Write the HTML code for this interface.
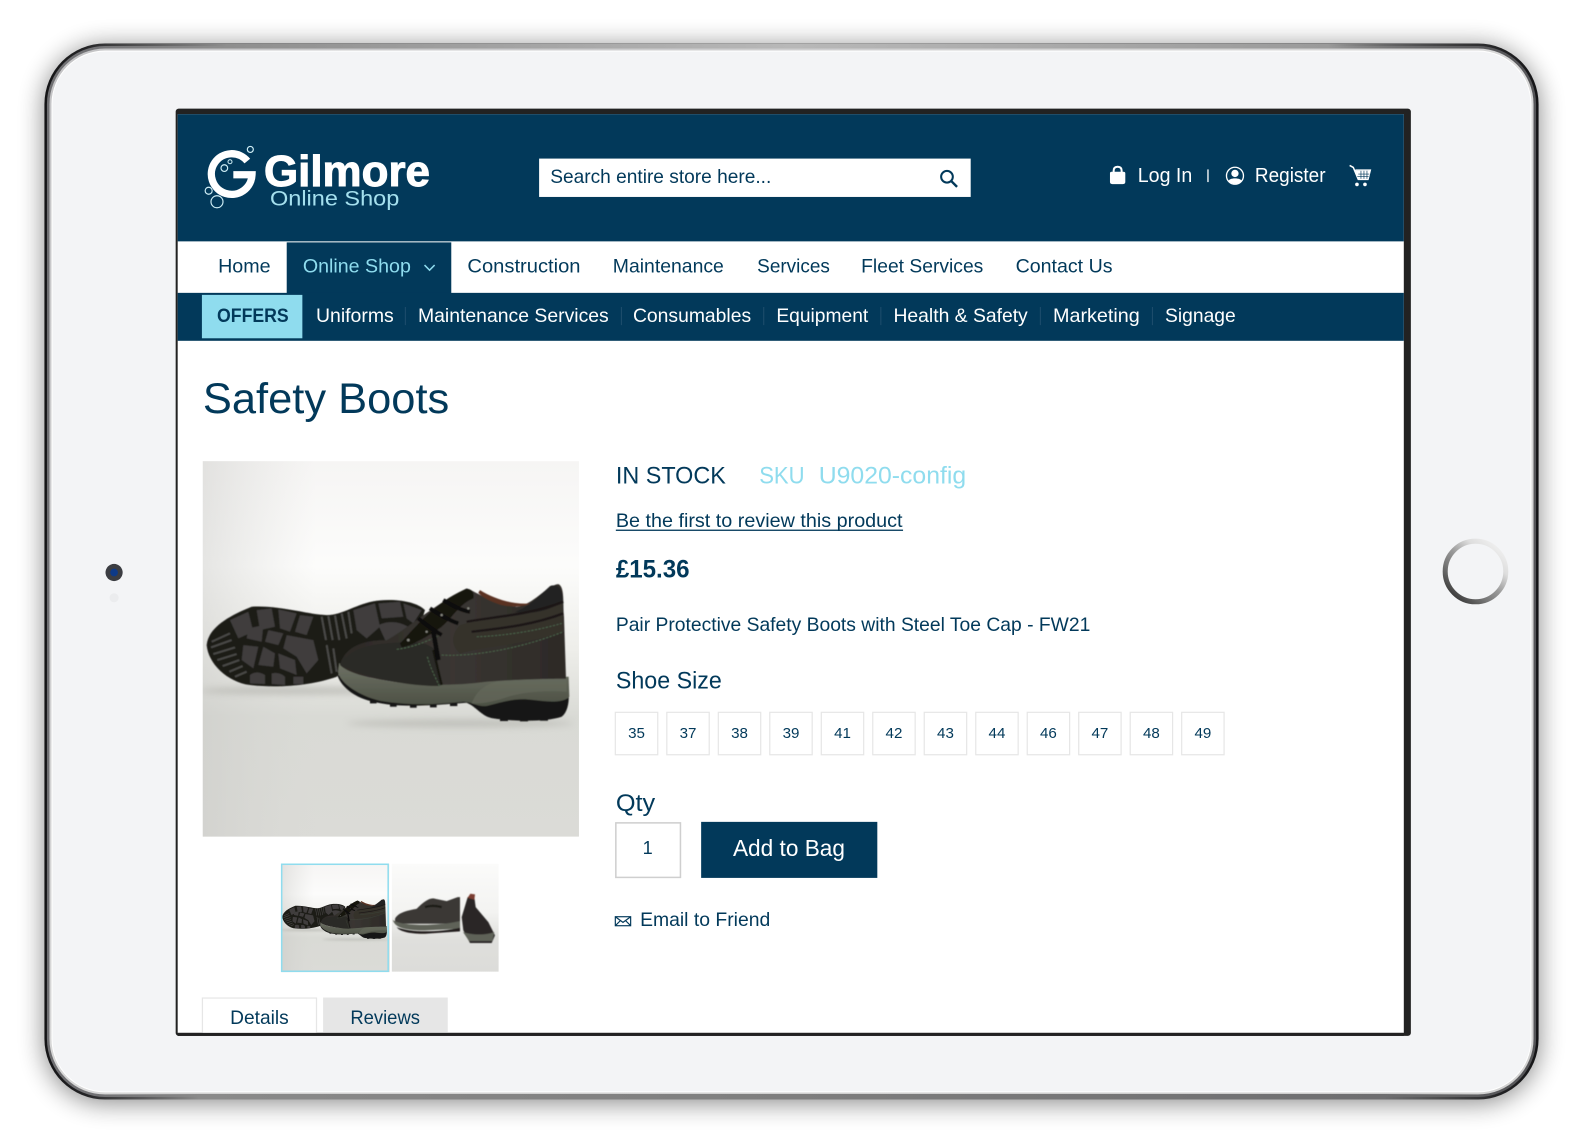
<!DOCTYPE html>
<html><head><meta charset="utf-8"><title>Gilmore Online Shop – Safety Boots</title>
<style>
html,body{margin:0;padding:0;background:#fff;width:1583px;height:1144px;overflow:hidden}
svg{display:block}
text{font-family:"Liberation Sans",sans-serif;fill:#02395a}
</style></head><body>
<svg width="1583" height="1144" viewBox="0 0 1568 1133" xmlns="http://www.w3.org/2000/svg">
<defs>
<filter id="sh" x="-10%" y="-10%" width="120%" height="120%"><feGaussianBlur stdDeviation="13"/></filter>
<filter id="soft" x="-5%" y="-5%" width="110%" height="110%"><feGaussianBlur stdDeviation="1.6"/></filter>
<filter id="soft2" x="-20%" y="-100%" width="140%" height="300%"><feGaussianBlur stdDeviation="10"/></filter>
<linearGradient id="edge" x1="0" x2="1" y1="0" y2="0"><stop offset="0" stop-color="#141416"/><stop offset=".04" stop-color="#2a2a2c"/><stop offset=".5" stop-color="#777"/><stop offset=".96" stop-color="#2a2a2c"/><stop offset="1" stop-color="#141416"/></linearGradient>
<linearGradient id="edge1" x1="0" x2="1" y1="0" y2="0"><stop offset="0" stop-color="#6f6f72"/><stop offset=".5" stop-color="#999"/><stop offset="1" stop-color="#555558"/></linearGradient>
<linearGradient id="edge2" x1="0" x2="1" y1="0" y2="1"><stop offset="0" stop-color="#c4c4c6"/><stop offset=".5" stop-color="#d8d8d8"/><stop offset="1" stop-color="#d2d2d2"/></linearGradient>
<linearGradient id="topb" x1="0" x2="1" y1="0" y2="0"><stop offset="0" stop-color="#888" stop-opacity="0"/><stop offset=".1" stop-color="#8e8e8e"/><stop offset=".5" stop-color="#b8b8b8"/><stop offset=".88" stop-color="#9a9a9a"/><stop offset="1" stop-color="#555" stop-opacity="0"/></linearGradient>
<linearGradient id="botb" x1="0" x2="1" y1="0" y2="0"><stop offset="0" stop-color="#777" stop-opacity="0"/><stop offset=".08" stop-color="#8a8a8a"/><stop offset=".5" stop-color="#7e7e7e"/><stop offset=".92" stop-color="#6e6e70"/><stop offset="1" stop-color="#666" stop-opacity="0"/></linearGradient>
<linearGradient id="ring" x1=".1" y1=".95" x2=".9" y2=".05"><stop offset="0" stop-color="#333"/><stop offset=".3" stop-color="#777"/><stop offset=".5" stop-color="#999"/><stop offset=".75" stop-color="#ddd"/><stop offset="1" stop-color="#f2f2f2"/></linearGradient>
<linearGradient id="upper" x1="0" x2="1" y1="0" y2="0"><stop offset="0" stop-color="#2c2926"/><stop offset=".5" stop-color="#3a3632"/><stop offset="1" stop-color="#2d2a27"/></linearGradient>
<linearGradient id="mid" x1="0" x2="0" y1="0" y2="1"><stop offset="0" stop-color="#6e7265"/><stop offset="1" stop-color="#4c5044"/></linearGradient>
<linearGradient id="pbg" x1="0" x2="0" y1="0" y2="1"><stop offset="0" stop-color="#f6f5f4"/><stop offset=".28" stop-color="#fcfcfb"/><stop offset=".5" stop-color="#eeeeea"/><stop offset=".68" stop-color="#d9dad5"/><stop offset="1" stop-color="#dbdbd7"/></linearGradient>
<linearGradient id="pleft" x1="0" x2="1" y1="0" y2="0"><stop offset="0" stop-color="#c9c9c6" stop-opacity=".45"/><stop offset=".3" stop-color="#d6d6d3" stop-opacity="0"/></linearGradient>
<linearGradient id="tbg" x1="0" x2="0" y1="0" y2="1"><stop offset="0" stop-color="#fbfbfa"/><stop offset=".45" stop-color="#f3f3f1"/><stop offset=".7" stop-color="#dfdfdc"/><stop offset="1" stop-color="#dcdcd9"/></linearGradient>
<clipPath id="cp1"><rect x="8" y="18" width="1129" height="1127"/></clipPath>
<clipPath id="cp2"><rect x="0" y="0" width="106" height="107"/></clipPath>

<g id="photo">
 <g clip-path="url(#cp1)">
  <rect x="8" y="18" width="1129" height="1127" fill="url(#pbg)"/>
  <rect x="8" y="18" width="1129" height="1127" fill="url(#pleft)"/>
  <g transform="translate(0,315)">
   <ellipse cx="300" cy="392" rx="300" ry="12" fill="#a8a8a2" opacity=".55" filter="url(#soft2)"/>
   <ellipse cx="780" cy="490" rx="340" ry="12" fill="#a8a8a2" opacity=".5" filter="url(#soft2)"/>
   <g filter="url(#soft)">
   <!-- sole -->
   <path d="M20 255C25 205 80 170 155 140C240 135 330 165 380 165C430 165 470 130 530 122C590 115 650 125 675 150L640 260L460 300L410 350C340 375 240 385 150 375C80 365 25 310 20 255Z" fill="#1b1a18"/>
   <g fill="#3f3e3c">
    <path d="M90 180L145 155L160 215L115 235Z"/><path d="M170 150L215 145L225 200L180 210Z"/><path d="M235 148L290 160L270 215L240 205Z"/><path d="M300 165L340 170L320 225L285 215Z"/>
    <path d="M145 205L190 195L185 245L140 235Z"/><path d="M205 210L250 220L235 255L195 245Z"/><path d="M260 225L340 240L355 300L320 340L290 290L250 265Z"/>
    <path d="M130 255L175 260L160 325L125 300Z"/><path d="M190 260L225 280L220 320L175 315Z"/><path d="M235 280L285 300L290 345L240 325Z"/>
    <path d="M150 345Q170 330 195 345L195 372L150 370Z"/><path d="M215 340Q240 335 255 350L255 375L215 372Z"/><path d="M280 350L310 350L310 372L280 372Z"/>
    <path d="M460 150L525 130L540 200L500 235L470 210Z"/><path d="M535 130L600 125L610 170L545 175Z"/><path d="M610 130L665 150L640 190L620 175Z"/>
    <path d="M535 195Q580 175 625 200L620 240L560 250Z"/>
   </g>
   <g stroke="#4a4946" stroke-width="6" fill="none">
    <path d="M35 245L90 220M33 262L95 240M40 282L105 262M52 300L110 282M68 318L118 300M88 335L128 318M105 350L140 335"/>
    <path d="M365 170L378 240M385 168L398 240M405 166L418 240M425 160L440 235M445 155L455 220"/>
    <path d="M380 255L395 340M400 265L410 335"/>
   </g>
   <!-- boot outsole -->
   <path d="M412 345C425 385 470 415 520 425C600 445 700 435 800 428C830 440 845 470 880 475C950 485 1040 485 1085 470C1105 455 1108 420 1106 395L900 360L600 370Z" fill="#191816"/>
   <g fill="#191816"><rect x="510" y="418" width="20" height="12"/><rect x="570" y="428" width="20" height="12"/><rect x="630" y="432" width="20" height="11"/><rect x="690" y="432" width="20" height="10"/><rect x="750" y="428" width="22" height="10"/><rect x="900" y="472" width="24" height="11"/><rect x="960" y="474" width="24" height="10"/><rect x="1020" y="472" width="24" height="10"/></g>
   <!-- midsole -->
   <path d="M418 308C430 330 480 350 560 362C650 378 760 375 860 360C950 350 1040 350 1106 350L1108 410C1090 430 1040 425 1000 420C950 412 910 425 860 438C830 440 815 425 790 425C720 432 630 438 540 422C480 408 420 370 414 335Z" fill="url(#mid)"/>
   <path d="M815 430C830 390 860 370 900 362L1100 352L1100 395C1040 390 960 395 910 415C880 425 845 432 815 430Z" fill="#676b5d" opacity=".6"/>
   <!-- upper -->
   <path d="M420 315C432 270 470 240 560 240C610 215 700 135 800 85C830 95 870 130 950 140C1000 135 1040 75 1075 72C1095 80 1088 130 1092 170L1098 356C1040 356 950 358 860 365C760 378 650 378 560 362C490 352 440 335 420 315Z" fill="url(#upper)"/>
   <path d="M840 90C880 115 940 135 990 130C975 140 940 142 905 135C870 125 845 110 835 98Z" fill="#5a3022"/>
   <path d="M780 195C850 175 960 170 1088 130L1090 215C990 250 880 255 780 280C750 255 755 220 780 195Z" fill="#34312c"/>
   <path d="M430 310C445 270 500 255 560 250C620 245 680 240 705 270C715 310 720 340 720 378C640 378 570 365 500 345C465 335 440 325 430 310Z" fill="#2b2926"/>
   <path d="M1050 78C1070 70 1090 85 1088 125C1050 150 1000 165 945 155C990 140 1020 105 1050 78Z" fill="#242220"/>
   <path d="M800 185C880 170 990 165 1090 125M815 215C900 205 1000 195 1090 160" stroke="#1a1816" stroke-width="7" fill="none"/>
   <path d="M725 285C810 290 950 270 1090 215" stroke="#4e6a4e" stroke-width="2.5" stroke-dasharray="7 4" fill="none"/>
   <path d="M590 268C640 262 690 240 720 225M682 290C690 320 705 350 718 378M830 230C900 228 1000 215 1085 190" stroke="#4e6a4e" stroke-width="2.5" stroke-dasharray="7 4" fill="none"/>
   <path d="M700 270L725 375" stroke="#141311" stroke-width="7" fill="none"/>
   <!-- laces -->
   <path d="M600 250C640 210 700 130 790 90C810 80 825 95 820 115C780 130 760 170 725 200C690 225 640 255 605 262Z" fill="#131210"/>
   <path d="M655 175C680 195 700 210 725 225M690 145C720 165 745 180 775 190M730 120C755 135 780 150 810 155" stroke="#100f0d" stroke-width="12" fill="none"/>
   <path d="M700 215L715 300" stroke="#100f0d" stroke-width="14" fill="none"/>
   <g fill="#8a8a82"><circle cx="625" cy="240" r="4"/><circle cx="680" cy="215" r="3.500"/><circle cx="725" cy="165" r="3.500"/><circle cx="805" cy="145" r="3.500"/></g>
   </g>
  </g>
 </g>
</g>
</defs>

<rect width="1568" height="1133" fill="#fff"/>
<!-- tablet shadow -->
<rect x="44" y="46" width="1480" height="1046" rx="60" fill="#000" opacity=".48" filter="url(#sh)"/>
<!-- frame -->
<rect x="44" y="43" width="1480" height="1046" rx="60" fill="url(#edge)"/>
<rect x="46.500" y="45.500" width="1475" height="1041" rx="57.500" fill="url(#edge1)"/>
<rect x="49" y="48" width="1470" height="1036" rx="55" fill="url(#edge2)"/>
<rect x="85" y="43.500" width="1398" height="4.500" fill="url(#topb)"/>
<rect x="85" y="1083.500" width="1398" height="5.500" fill="url(#botb)"/>
<rect x="51" y="50" width="1466" height="1032" rx="53" fill="#fff"/>
<rect x="52" y="51" width="1464" height="1030" rx="52" fill="#f3f4f6"/>
<!-- camera -->
<circle cx="113" cy="567" r="8.500" fill="#3b3d42"/><circle cx="113" cy="567" r="3.800" fill="#0d3a88"/>
<circle cx="113" cy="592" r="4.500" fill="#ebecee"/>
<!-- home -->
<circle cx="1461.500" cy="566" r="30" fill="none" stroke="url(#ring)" stroke-width="5"/>
<!-- screen -->
<rect x="174" y="107.500" width="1223.500" height="918.500" rx="3" fill="#222"/>
<rect x="176" y="113" width="1214.500" height="910" fill="#fff"/>
<rect x="176" y="113" width="1214.500" height="126" fill="#02395a"/>

<!-- logo -->
<g transform="scale(.9905) translate(170,100) scale(.33333)">
 <path d="M232 183A61 61 0 1 0 246 224H190" fill="none" stroke="#fff" stroke-width="22"/>
 <circle cx="163" cy="204" r="10" fill="#02395a" stroke="#cfeef6" stroke-width="3.500"/>
 <circle cx="180" cy="185" r="6" fill="#02395a" stroke="#cfeef6" stroke-width="3"/>
 <g fill="none" stroke="#cfeef6" stroke-width="3.500"><circle cx="241" cy="148" r="9"/><circle cx="116" cy="272" r="10.500"/><circle cx="141" cy="305" r="18"/></g>
 <text x="282" y="258" font-size="130" font-weight="700" textLength="498" lengthAdjust="spacingAndGlyphs" style="fill:#fff;stroke:#fff;stroke-width:3">Gilmore</text>
 <text x="300" y="317" font-size="65" textLength="388" lengthAdjust="spacingAndGlyphs" style="fill:#a5e0ee">Online Shop</text>
</g>

<!-- search -->
<rect x="534" y="157" width="427.500" height="38" fill="#fff"/>
<text x="545" y="181" font-size="19" textLength="219" lengthAdjust="spacingAndGlyphs">Search entire store here...</text>
<circle cx="938" cy="175" r="5.800" fill="none" stroke="#02395a" stroke-width="2"/><path d="M942.500 179.500L948 185" stroke="#02395a" stroke-width="2.400"/>

<!-- account -->
<g transform="scale(.9905) translate(1080,140) scale(.33333)" fill="#fff">
 <path d="M90 100Q90 95 95 95H130Q136 95 136 100V125Q136 132 129 132H97Q90 132 90 125Z"/>
 <path d="M101 97V92Q101 80 113 80Q125 80 125 92V97" fill="none" stroke="#fff" stroke-width="6"/>
 <rect x="382" y="88" width="4" height="38"/>
 <circle cx="465" cy="107" r="25.500" fill="none" stroke="#fff" stroke-width="4"/>
 <circle cx="465" cy="100" r="11"/><path d="M445 124C447 112 483 112 486 124Q466 138 445 124Z"/>
 <path d="M809 76L820 82L835 118H864L871 90H826" fill="none" stroke="#fff" stroke-width="4.500"/>
 <path d="M826 92H870L864 116H836Z"/><path d="M835 102H868M832 109H866M843 92V116M852 92V116M861 92V116" stroke="#02395a" stroke-width="2"/>
 <circle cx="831" cy="133" r="5.500"/><circle cx="855" cy="133" r="5.500"/>
</g>
<text x="1127" y="180" font-size="20" textLength="54" lengthAdjust="spacingAndGlyphs" style="fill:#fff">Log In</text>
<text x="1243" y="180" font-size="20" textLength="70" lengthAdjust="spacingAndGlyphs" style="fill:#fff">Register</text>

<!-- main nav -->
<rect x="284" y="240" width="163" height="50.500" fill="#02395a"/>
<g font-size="19.500">
<text x="216" y="270" textLength="52" lengthAdjust="spacingAndGlyphs">Home</text>
<text x="300" y="270" textLength="107" lengthAdjust="spacingAndGlyphs" style="fill:#8fdcee">Online Shop</text>
<text x="463" y="270" textLength="112" lengthAdjust="spacingAndGlyphs">Construction</text>
<text x="607" y="270" textLength="110" lengthAdjust="spacingAndGlyphs">Maintenance</text>
<text x="750" y="270" textLength="72" lengthAdjust="spacingAndGlyphs">Services</text>
<text x="853" y="270" textLength="121" lengthAdjust="spacingAndGlyphs">Fleet Services</text>
<text x="1006" y="270" textLength="96" lengthAdjust="spacingAndGlyphs">Contact Us</text>
</g>
<path d="M420.500 262.500L425.500 267.500L430.500 262.500" fill="none" stroke="#8fdcee" stroke-width="1.500"/>

<!-- sub nav -->
<rect x="176" y="290" width="1214.500" height="47.500" fill="#02395a"/>
<rect x="200" y="292" width="99.500" height="43" fill="#8fdcee"/>
<text x="215" y="319" font-size="19" font-weight="700" textLength="71" lengthAdjust="spacingAndGlyphs">OFFERS</text>
<g font-size="19.500">
<text x="313" y="319" textLength="77" lengthAdjust="spacingAndGlyphs" style="fill:#fff">Uniforms</text>
<text x="414" y="319" textLength="189" lengthAdjust="spacingAndGlyphs" style="fill:#fff">Maintenance Services</text>
<text x="627" y="319" textLength="117" lengthAdjust="spacingAndGlyphs" style="fill:#fff">Consumables</text>
<text x="769" y="319" textLength="91" lengthAdjust="spacingAndGlyphs" style="fill:#fff">Equipment</text>
<text x="885" y="319" textLength="133" lengthAdjust="spacingAndGlyphs" style="fill:#fff">Health &amp; Safety</text>
<text x="1043" y="319" textLength="86" lengthAdjust="spacingAndGlyphs" style="fill:#fff">Marketing</text>
<text x="1154" y="319" textLength="70" lengthAdjust="spacingAndGlyphs" style="fill:#fff">Signage</text>
</g>
<path d="M401.500 304V322M615.500 304V322M756.500 304V322M872.500 304V322M1030.500 304V322M1141.500 304V322" stroke="#1f4e6d" stroke-width="1"/>

<!-- title -->
<text x="201" y="409" font-size="42" textLength="244" lengthAdjust="spacingAndGlyphs">Safety Boots</text>

<!-- photo -->
<use href="#photo" transform="scale(.9905) translate(200,455) scale(.33333)"/>

<!-- thumbs -->
<g transform="translate(278.500,855.500)">
 <use href="#photo" transform="scale(.0953) translate(-8,-18)"/>
 <rect x=".5" y=".5" width="105.500" height="106" fill="none" stroke="#8fdcee" stroke-width="1.500"/>
</g>
<g transform="translate(388,855.500)">
 <g clip-path="url(#cp2)">
 <rect width="106" height="107" fill="url(#tbg)"/>
 <g transform="scale(.33)" filter="url(#soft)">
  <path d="M10 165C20 145 50 140 75 135C95 115 115 100 130 105L165 112L198 100L205 100L205 180L10 180Z" fill="#3a3835"/>
  <path d="M3 168C20 185 120 190 205 172L205 195L100 200C50 200 10 195 3 168Z" fill="#5f6258"/>
  <path d="M15 190C50 205 130 208 205 192L205 203L100 210C60 210 25 205 15 190Z" fill="#201f1d"/>
  <path d="M100 130C115 125 130 125 150 130" stroke="#1c1a18" stroke-width="7" fill="none"/>
  <path d="M228 100L248 100L252 130L290 175L310 215L300 238L235 238L215 200L210 160Z" fill="#2a2826"/>
  <path d="M228 102L236 90L250 92L248 108Z" fill="#7a3c30"/>
  <path d="M214 205C240 215 285 215 308 205L302 232L232 232Z" fill="#5f6258"/>
 </g>
 </g>
</g>

<!-- product info -->
<text x="610" y="479" font-size="24" textLength="109" lengthAdjust="spacingAndGlyphs">IN STOCK</text>
<text x="752" y="479" font-size="24" textLength="45" lengthAdjust="spacingAndGlyphs" style="fill:#8fdcee">SKU</text>
<text x="811" y="479" font-size="24" textLength="146" lengthAdjust="spacingAndGlyphs" style="fill:#8fdcee">U9020-config</text>
<text x="610" y="522" font-size="19.500" textLength="284" lengthAdjust="spacingAndGlyphs">Be the first to review this product</text>
<rect x="610" y="524.500" width="284.500" height="1.300" fill="#02395a"/>
<text x="610" y="572" font-size="25" font-weight="700" textLength="73" lengthAdjust="spacingAndGlyphs">£15.36</text>
<text x="610" y="625" font-size="19" textLength="470" lengthAdjust="spacingAndGlyphs">Pair Protective Safety Boots with Steel Toe Cap - FW21</text>
<text x="610" y="682" font-size="24" textLength="105" lengthAdjust="spacingAndGlyphs">Shoe Size</text>

<!-- sizes -->
<g fill="#fff" stroke="#e6e6e6" stroke-width="1.200">
<rect x="609.500" y="705.500" width="42" height="42"/><rect x="660.500" y="705.500" width="42" height="42"/><rect x="711.500" y="705.500" width="42" height="42"/><rect x="762.500" y="705.500" width="42" height="42"/><rect x="813.500" y="705.500" width="42" height="42"/><rect x="864.500" y="705.500" width="42" height="42"/><rect x="915.500" y="705.500" width="42" height="42"/><rect x="966.500" y="705.500" width="42" height="42"/><rect x="1017.500" y="705.500" width="42" height="42"/><rect x="1068.500" y="705.500" width="42" height="42"/><rect x="1119.500" y="705.500" width="42" height="42"/><rect x="1170.500" y="705.500" width="42" height="42"/>
</g>
<g font-size="15" text-anchor="middle">
<text x="630.500" y="731">35</text><text x="681.500" y="731">37</text><text x="732.500" y="731">38</text><text x="783.500" y="731">39</text><text x="834.500" y="731">41</text><text x="885.500" y="731">42</text><text x="936.500" y="731">43</text><text x="987.500" y="731">44</text><text x="1038.500" y="731">46</text><text x="1089.500" y="731">47</text><text x="1140.500" y="731">48</text><text x="1191.500" y="731">49</text>
</g>

<!-- qty -->
<text x="610" y="803" font-size="24" textLength="39" lengthAdjust="spacingAndGlyphs">Qty</text>
<rect x="610" y="815" width="64" height="54" fill="#fff" stroke="#cfcfcf" stroke-width="1.500"/>
<text x="641.500" y="846" font-size="18" text-anchor="middle">1</text>
<rect x="694.500" y="814" width="174.500" height="55.500" fill="#02395a"/>
<text x="726" y="848" font-size="22.500" textLength="111" lengthAdjust="spacingAndGlyphs" style="fill:#fff">Add to Bag</text>

<!-- email -->
<g transform="scale(.9905) translate(600,890) scale(.33333)" fill="none" stroke="#02395a" stroke-width="3.500">
 <rect x="46" y="80" width="46" height="27"/><path d="M46 80L69 97L92 80M46 107L62 91M92 107L76 91"/>
</g>
<text x="634" y="917" font-size="19.500" textLength="129" lengthAdjust="spacingAndGlyphs">Email to Friend</text>

<!-- tabs -->
<rect x="200.500" y="988.500" width="113" height="36" fill="#fff" stroke="#e6e6e6" stroke-width="1.200"/>
<rect x="320" y="988" width="123.500" height="35" fill="#e6e6e6"/>
<text x="228" y="1014" font-size="19.500" textLength="58" lengthAdjust="spacingAndGlyphs">Details</text>
<text x="347" y="1014" font-size="19.500" textLength="69" lengthAdjust="spacingAndGlyphs">Reviews</text>
<rect x="176" y="1023" width="1214.500" height="3" fill="#222"/>
</svg>
</body></html>
